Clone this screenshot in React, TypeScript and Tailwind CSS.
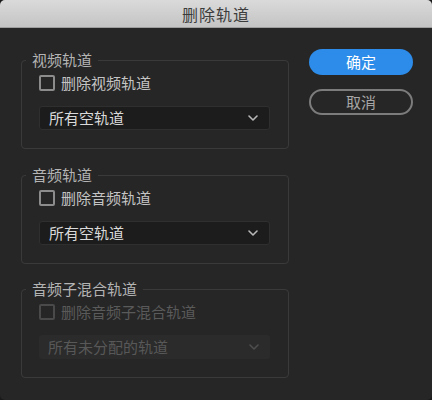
import React from "react";

const font = { fontFamily: '"Noto Sans CJK SC", "Noto Sans", sans-serif' };

function Chevron({ color }: { color: string }) {
  return (
    <svg width="10" height="6" viewBox="0 0 10 6" fill="none">
      <path d="M1 1 L5 5 L9 1" stroke={color} strokeWidth="1.6" strokeLinecap="round" strokeLinejoin="round" />
    </svg>
  );
}

function Group({
  title,
  label,
  value,
  disabled,
  className,
}: {
  title: string;
  label: string;
  value: string;
  disabled?: boolean;
  className?: string;
}) {
  return (
    <fieldset
      className={`border border-[#3a3a3a] rounded-[4px] pl-[17px] pr-[18px] pt-[5px] pb-[18px] ${className ?? ""}`}
    >
      <legend className="ml-[-13px] px-[6px] h-[20px] text-[15px] leading-[20px] text-[#b4b4b4]">
        {title}
      </legend>
      <div className="flex items-center h-[16px] gap-[6px]">
        <span
          className={`w-[16px] h-[16px] rounded-[2px] border-2 ${
            disabled ? "border-[#4a4a4a]" : "border-[#8c8c8c]"
          }`}
        />
        <span className={`text-[15px] leading-[16px] ${disabled ? "text-[#5a5a5a]" : "text-[#c4c4c4]"}`}>
          {label}
        </span>
      </div>
      <div
        className={`mt-[15px] h-[24px] rounded-[3px] flex items-center justify-between pl-[9px] pr-[11px] ${
          disabled ? "bg-[#2b2b2b]" : "bg-[#1c1c1c] border border-[#2f2f2f]"
        }`}
      >
        <span className={`text-[15px] leading-[20px] ${disabled ? "text-[#585858]" : "text-[#dadada]"}`}>
          {value}
        </span>
        <Chevron color={disabled ? "#4e4e4e" : "#b8b8b8"} />
      </div>
    </fieldset>
  );
}

export default function App() {
  return (
    <div className="w-[432px] h-[400px] bg-[#1a1a1a]" style={font}>
      <div className="w-[432px] h-[400px] bg-[#262626] rounded-[5px] overflow-hidden flex flex-col">
        <div className="h-[28px] shrink-0 bg-gradient-to-b from-[#dadada] to-[#c4c4c4] border-b border-[#9e9e9e] flex items-center justify-center">
          <span className="text-[16px] leading-[20px] text-[#3c3c3c] tracking-[1px]">删除轨道</span>
        </div>
        <div className="flex pl-[21px] pt-[22px]">
          <div className="w-[268px] flex flex-col">
            <Group title="视频轨道" label="删除视频轨道" value="所有空轨道" />
            <Group className="mt-[16px]" title="音频轨道" label="删除音频轨道" value="所有空轨道" />
            <Group className="mt-[15px]" title="音频子混合轨道" label="删除音频子混合轨道" value="所有未分配的轨道" disabled />
          </div>
          <div className="ml-[20px] w-[104px] flex flex-col gap-[14px]">
            <div className="h-[26px] mt-[-1px] rounded-full bg-[#2d8ce9] flex items-center justify-center text-[15px] leading-[20px] text-white">
              确定
            </div>
            <div className="h-[26px] rounded-full border-2 border-[#7c7c7c] flex items-center justify-center text-[15px] leading-[20px] text-[#a6a6a6]">
              取消
            </div>
          </div>
        </div>
      </div>
    </div>
  );
}
